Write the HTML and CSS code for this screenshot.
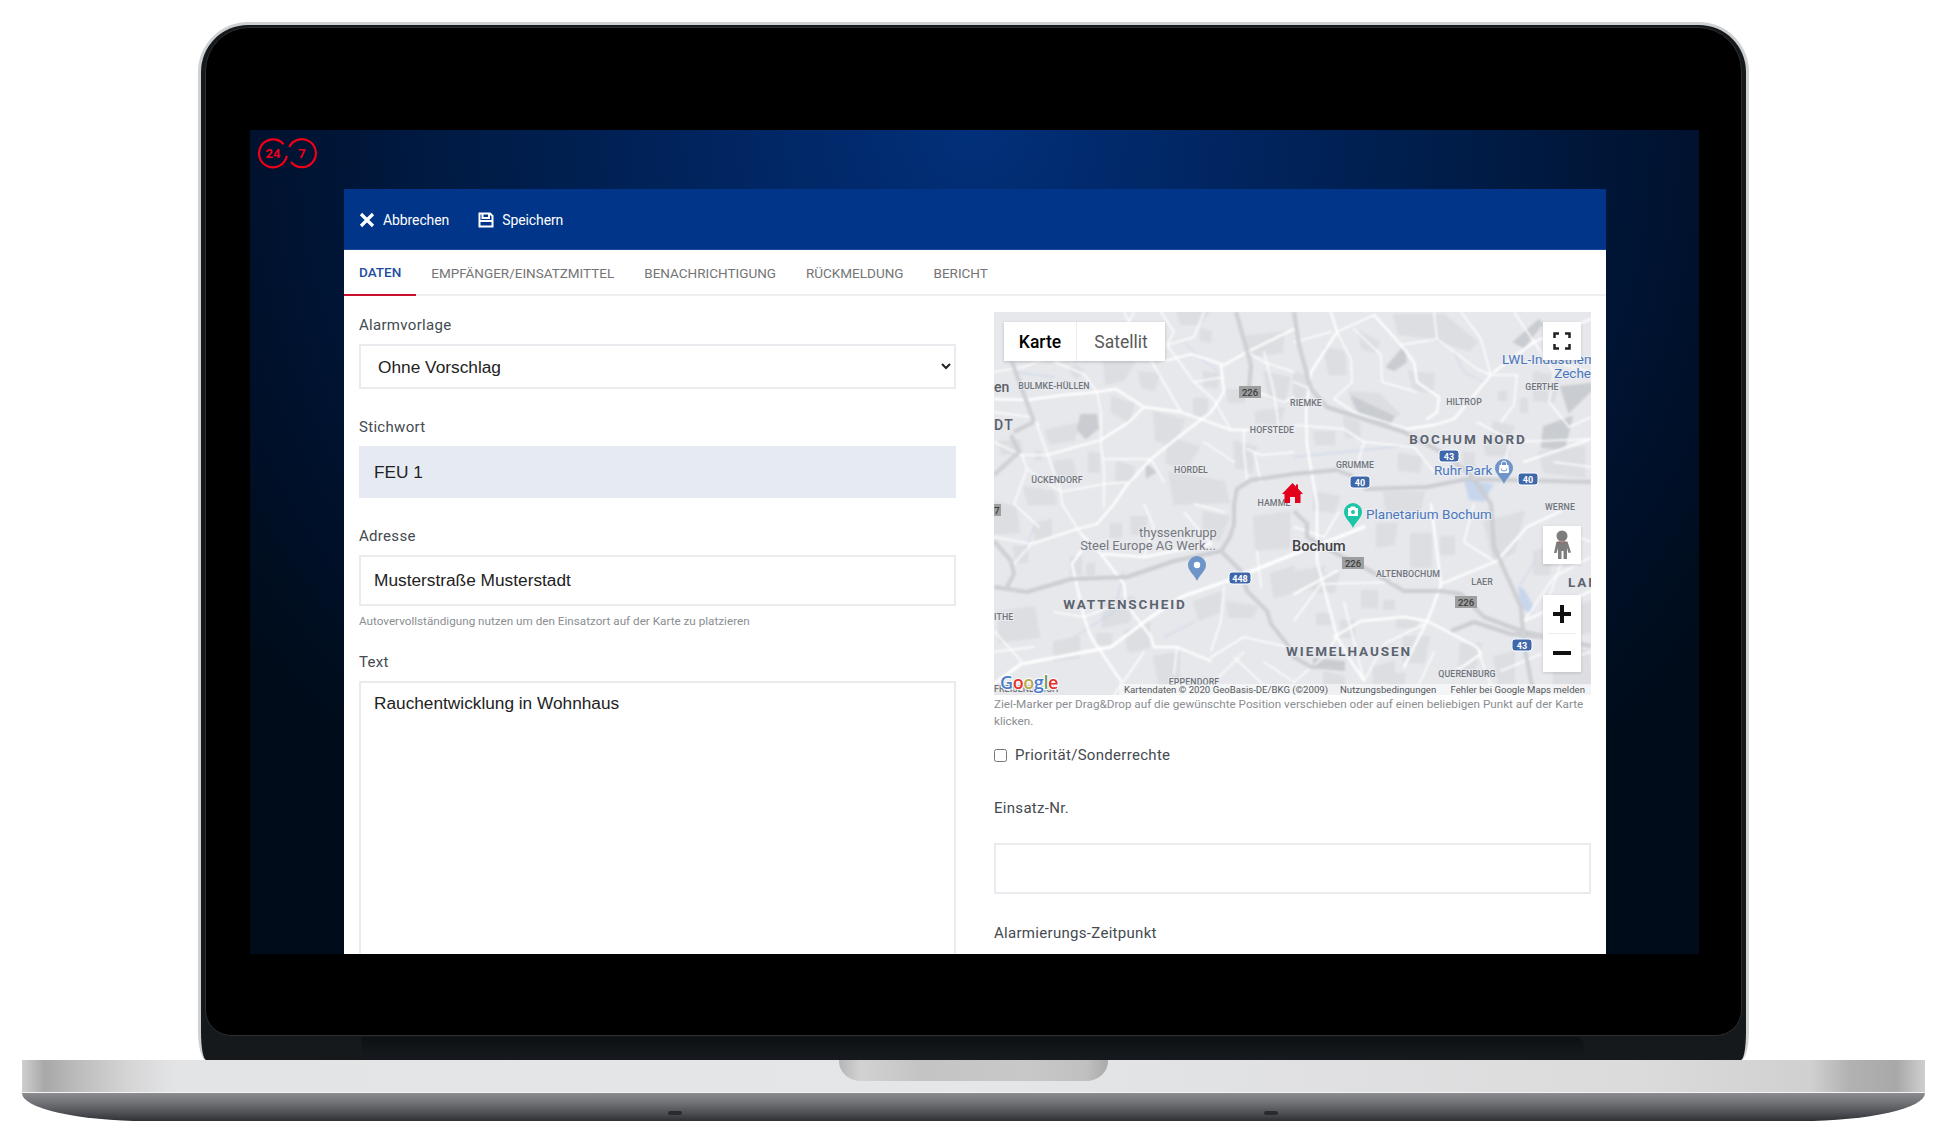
FILE: index.html
```html
<!DOCTYPE html>
<html lang="de">
<head>
<meta charset="utf-8">
<title>Alarm</title>
<link rel="stylesheet" href="styles.css">
</head>
<body>
<div class="device">
  <div class="lid">
    <div class="frame">
      <div class="glass">
        <div class="screen">
          <div class="topbar">
            <svg class="logo" viewBox="0 0 62 34" width="62" height="34">
              <path class="logo-ring" d="M26.700 7.300A14 14 0 1 0 29.800 18.700"/>
              <path class="logo-ring" d="M32.300 10A14 14 0 1 1 34 25"/>
              <text class="logo-text" x="16" y="21" text-anchor="middle">24</text>
              <text class="logo-text" x="45" y="21" text-anchor="middle">7</text>
            </svg>
          </div>
          <div class="panel">
            <div class="toolbar">
              <button class="tool">
                <svg class="tool-icon" viewBox="0 0 16 16" width="16" height="16"><path d="M2 2l12 12M14 2L2 14"/></svg>
                Abbrechen
              </button>
              <button class="tool">
                <svg class="tool-icon tool-icon-thin" viewBox="0 0 16 16" width="16" height="16"><path d="M1.500 1.500h10.500l2.500 2.500v10.500h-13zM4.500 1.500v4.500h6.500v-4.500M1.500 9h13"/></svg>
                Speichern
              </button>
            </div>
            <div class="tabs">
              <span class="tab tab-active">Daten</span>
              <span class="tab">Empfänger/Einsatzmittel</span>
              <span class="tab">Benachrichtigung</span>
              <span class="tab">Rückmeldung</span>
              <span class="tab">Bericht</span>
            </div>
            <div class="form">
              <div class="col">
                <label class="label">Alarmvorlage</label>
                <select class="select"><option>Ohne Vorschlag</option></select>
                <label class="label label-gap">Stichwort</label>
                <input class="input input-filled" value="FEU 1">
                <label class="label label-gap">Adresse</label>
                <input class="input" value="Musterstraße Musterstadt">
                <p class="hint hint-short">Autovervollständigung nutzen um den Einsatzort auf der Karte zu platzieren</p>
                <label class="label">Text</label>
                <textarea class="area">Rauchentwicklung in Wohnhaus</textarea>
              </div>
              <div class="col col-right">
                <div class="map">
                  <svg class="map-svg" viewBox="0 0 597 383" width="597" height="383">
                    <defs>
                      <g id="hw-lines">
                        <polyline points="18,50 40,110"/>
                        <polyline points="20,120 40,110"/>
                        <polyline points="17,123 25,140 0,163"/>
                        <polyline points="242,0 257,53 255,77"/>
                        <polyline points="227,239 236,225 240,212 240,192 243,177 257,168 300,162 343,158 358,164 372,177 433,175 473,167 597,170"/>
                        <polyline points="227,239 180,249 133,265 77,267 33,280 0,275"/>
                        <polyline points="300,0 305,33 317,77 333,95 410,120 447,140 477,163 497,192 500,235 527,295 530,332 537,369 540,384"/>
                        <polyline points="300,199 313,212 313,225 343,242 373,257 410,279 447,279 467,282 490,305 530,320 597,334"/>
                        <polyline points="457,319 480,310 517,322 550,325"/>
                        <polyline points="227,239 247,259 253,279 273,299 277,312 293,332 300,345 317,355 350,355"/>
                        <polyline points="0,229 17,249 20,262 13,275"/>
                      </g>
                    </defs>
                    <g class="map-ground">
                      <path class="blob" d="M82 53L90 60 82 66 75 57ZM110 50L140 50 130 68 112 72ZM52 118L84 112 80 128 56 132ZM118 85L140 92 135 110 118 100ZM160 100L190 108 180 135 162 128ZM175 125L205 135 190 160 172 150ZM200 87L213 87 213 105 200 103ZM233 78L250 78 250 90 235 90ZM175 160L230 170 235 190 180 192ZM123 150L140 155 138 170 122 168ZM42 140L47 140 47 147 42 147ZM30 175L60 180 62 192 35 192ZM207 17L217 20 216 30 207 28ZM183 0L215 0 205 12 187 12ZM330 35L350 40 352 62 335 62ZM400 3L450 3 483 30 475 38 430 25 405 22ZM355 80L385 82 405 102 385 112 360 95ZM350 105L365 110 366 125 352 125ZM405 142L428 145 425 160 405 158ZM320 120L340 120 340 132 322 132ZM470 140L480 142 480 155 470 155ZM490 127L515 127 515 143 492 143ZM527 87L533 87 533 100 527 100ZM505 80L512 80 512 88 505 88ZM117 212L127 212 127 225 117 225ZM137 205L153 205 150 222 138 222ZM40 212L57 208 57 225 42 228ZM20 235L33 235 33 250 22 250ZM77 245L87 245 87 262 77 262ZM93 252L100 252 100 262 93 262ZM200 290L228 280 225 300 205 308ZM233 290L263 295 258 305 235 305ZM103 322L117 322 117 332 103 332ZM160 345L185 340 185 372 165 372ZM277 262L300 255 300 280 280 285ZM417 222L437 222 437 255 417 255ZM383 212L403 212 400 232 383 235ZM447 225L460 225 460 242 447 242ZM368 279L383 279 383 295 368 295ZM390 289L400 289 400 297 390 297ZM323 302L337 302 337 312 323 312ZM347 309L360 309 360 325 347 325ZM403 307L423 307 423 315 403 315ZM380 355L400 350 400 368 380 372ZM467 332L487 332 480 360 465 358ZM393 362L410 362 410 372 393 372ZM250 25L290 20 288 40 255 45ZM262 100L290 96 285 112 262 110ZM0 190L22 195 25 220 0 222ZM490 210L530 200 520 240 500 250ZM540 240L560 235 555 262 540 262ZM560 300L597 290 597 320 565 325ZM110 290L140 285 135 310 108 315ZM300 260L330 255 325 275 300 280ZM5 130L25 128 28 140 8 142ZM60 150L78 148 82 165 62 168ZM145 60L165 62 160 78 148 75ZM240 130L262 135 258 160 242 155ZM270 60L296 66 290 90 275 86ZM210 60L225 62 222 76 210 74ZM95 140L105 142 105 160 95 160ZM365 20L385 30 380 40 368 36ZM300 60L315 65 310 85 300 85ZM415 60L440 62 438 80 420 78ZM540 60L565 65 560 90 540 88ZM500 110L520 115 515 125 498 122ZM545 140L590 135 590 165 550 160ZM320 180L345 185 340 200 320 198ZM390 180L430 180 425 200 392 200ZM5 300L40 295 45 325 5 330ZM130 320L155 310 155 335 135 340ZM60 330L85 325 85 345 60 348ZM210 200L235 205 225 228 208 225ZM260 205L295 200 295 235 262 238ZM320 262L345 262 340 280 320 280ZM410 325L435 325 430 350 410 350ZM500 345L520 340 520 370 505 372ZM560 330L595 340 597 372 560 372ZM330 360L350 365 350 383 330 383Z"/>
                      <path class="blob-dark" d="M87 103L102 103 104 116 92 126 84 118ZM152 152L161 160 153 165ZM393 55L410 35 412 50 400 58ZM520 30L545 8 548 12 530 35ZM550 115L578 105 570 137 548 135ZM567 75L597 72 597 78 575 100ZM320 347L350 350 350 358 320 355ZM358 85L400 105 395 112 365 100Z"/>
                      <path class="lake" d="M524 275L530 277 540 295 537 302 530 298 525 285ZM470 168L500 172 490 190 475 188Z"/>
                      <path class="stream" d="M460 40L470 60 490 70M300 145L400 135 430 130M190 30L205 45 225 60M60 65L20 60M540 250L525 275M130 260L120 300 80 325M200 310L170 325M40 215L30 240"/>
                      <g class="roads">
                        <polyline class="r2" points="0,87 33,88 70,83 103,80 122,77 150,95 187,100 207,107 237,118 300,118"/>
                        <polyline class="r1" points="90,62 103,80 107,100 107,133 110,157 110,195"/>
                        <polyline class="r2" points="53,143 107,128 135,110 150,95"/>
                        <polyline class="r1" points="158,50 187,100"/>
                        <polyline class="r2" points="167,50 197,42 230,53 253,40 300,17"/>
                        <polyline class="r1" points="173,33 200,70 220,88 237,118"/>
                        <polyline class="r2" points="227,53 230,80 217,100 187,123 157,147 133,173 120,192 103,212"/>
                        <polyline class="r1" points="43,113 67,180 68,192 87,222"/>
                        <polyline class="r1" points="28,143 53,143"/>
                        <polyline class="r1" points="28,143 33,157 67,180 110,172 133,170"/>
                        <polyline class="r1" points="110,147 157,147"/>
                        <polyline class="r1" points="253,137 267,143 300,140"/>
                        <polyline class="r1" points="250,118 250,140 253,167"/>
                        <polyline class="r1" points="167,0 180,20 173,33"/>
                        <polyline class="r1" points="0,100 37,105 45,113"/>
                        <polyline class="r1" points="90,62 60,50 100,40 130,20 140,0"/>
                        <polyline class="r2" points="337,0 343,20 317,60 312,100 313,133 323,192 323,249 343,325 357,349 370,369"/>
                        <polyline class="r1" points="343,20 380,3"/>
                        <polyline class="r2" points="380,3 407,33 420,50 423,70 445,85 443,100 433,107"/>
                        <polyline class="r1" points="360,17 387,43 388,70 423,80"/>
                        <polyline class="r1" points="343,20 357,47 358,70 340,87"/>
                        <polyline class="r1" points="407,33 443,27 483,57 497,63 523,63"/>
                        <polyline class="r2" points="497,63 460,107 440,113 413,117"/>
                        <polyline class="r1" points="523,63 520,93 507,110"/>
                        <polyline class="r2" points="500,60 540,30 597,7"/>
                        <polyline class="r1" points="467,0 487,27 497,63"/>
                        <polyline class="r1" points="300,113 350,117 370,130 363,153"/>
                        <polyline class="r2" points="530,150 597,127"/>
                        <polyline class="r1" points="510,153 517,127"/>
                        <polyline class="r2" points="437,192 447,272 440,292 433,309 410,355"/>
                        <polyline class="r2" points="447,272 503,249 533,215 567,199"/>
                        <polyline class="r2" points="300,282 343,259"/>
                        <polyline class="r1" points="300,309 327,272 400,270"/>
                        <polyline class="r2" points="340,325 367,309 410,305 433,309 483,335 487,342 453,365"/>
                        <polyline class="r1" points="370,369 390,332 430,312"/>
                        <polyline class="r1" points="507,359 547,342"/>
                        <polyline class="r2" points="530,309 597,279"/>
                        <polyline class="r1" points="567,252 550,299"/>
                        <polyline class="r3" points="300,242 233,269 187,285 157,305 117,335 27,352 0,372"/>
                        <polyline class="r2" points="37,232 83,217 103,212"/>
                        <polyline class="r1" points="37,232 20,252"/>
                        <polyline class="r1" points="0,225 37,232"/>
                        <polyline class="r2" points="90,235 78,252 90,305 97,325 127,369"/>
                        <polyline class="r2" points="110,242 150,245 217,232"/>
                        <polyline class="r2" points="87,222 107,242 130,272 132,292 157,325 160,335 183,335 217,349"/>
                        <polyline class="r1" points="183,335 180,362"/>
                        <polyline class="r1" points="0,319 27,349"/>
                        <polyline class="r1" points="217,345 250,325 293,335"/>
                        <polyline class="r1" points="230,275 227,309 217,339"/>
                        <polyline class="r1" points="263,239 267,275"/>
                        <polyline class="r3" points="233,269 300,242 345,225 370,215"/>
                        <polyline class="r1" points="0,60 30,55 55,45"/>
                        <polyline class="r1" points="0,130 28,143"/>
                        <polyline class="r1" points="33,157 20,192"/>
                        <polyline class="r1" points="133,173 155,150"/>
                        <polyline class="r1" points="157,147 170,170"/>
                        <polyline class="r1" points="200,70 230,65"/>
                        <polyline class="r1" points="260,140 267,170"/>
                        <polyline class="r1" points="270,40 280,80 285,118"/>
                        <polyline class="r1" points="255,77 290,90 300,85"/>
                        <polyline class="r1" points="300,60 270,50 253,40"/>
                        <polyline class="r1" points="130,0 145,30 158,50"/>
                        <polyline class="r1" points="210,0 200,25 173,33"/>
                        <polyline class="r1" points="210,130 240,150"/>
                        <polyline class="r1" points="300,30 337,20"/>
                        <polyline class="r1" points="443,27 440,0"/>
                        <polyline class="r1" points="520,0 540,30"/>
                        <polyline class="r1" points="560,50 597,60"/>
                        <polyline class="r1" points="540,30 560,60 555,90"/>
                        <polyline class="r1" points="560,150 597,155"/>
                        <polyline class="r1" points="370,130 420,135 440,160"/>
                        <polyline class="r1" points="340,87 360,100 413,117"/>
                        <polyline class="r1" points="483,110 520,130 597,127"/>
                        <polyline class="r1" points="555,90 575,115 597,105"/>
                        <polyline class="r1" points="300,70 317,77"/>
                        <polyline class="r1" points="300,215 330,225 345,200"/>
                        <polyline class="r1" points="480,192 470,230 500,249"/>
                        <polyline class="r1" points="560,215 597,230"/>
                        <polyline class="r1" points="597,245 560,265 530,309"/>
                        <polyline class="r1" points="350,290 370,369"/>
                        <polyline class="r1" points="300,370 330,345 343,325"/>
                        <polyline class="r1" points="440,340 420,383"/>
                        <polyline class="r1" points="483,335 500,383"/>
                        <polyline class="r1" points="560,350 597,340"/>
                        <polyline class="r1" points="20,192 45,215"/>
                        <polyline class="r1" points="150,192 160,215 150,245"/>
                        <polyline class="r1" points="200,192 230,200"/>
                        <polyline class="r1" points="150,340 120,383"/>
                        <polyline class="r1" points="240,345 280,383"/>
                        <polyline class="r1" points="220,370 250,340"/>
                        <polyline class="r1" points="60,300 90,305 130,290"/>
                        <polyline class="r1" points="0,340 40,335"/>
                        <polyline class="r1" points="270,350 300,370"/>
                        <polyline class="r1" points="190,200 217,232"/>
                      </g>
                      <use class="hw-outer" href="#hw-lines"/>
                      <use class="hw-inner" href="#hw-lines"/>
                    </g>
                    <g class="map-labels">
                      <text class="mt-big" x="0" y="80">en</text>
                      <text class="mt-big mt-wide" x="0" y="118">DT</text>
                      <text class="mt-small" x="60" y="77" text-anchor="middle">BULMKE-HÜLLEN</text>
                      <text class="mt-small" x="63" y="171" text-anchor="middle">ÜCKENDORF</text>
                      <text class="mt-small" x="197" y="161" text-anchor="middle">HORDEL</text>
                      <text class="mt-small" x="278" y="121" text-anchor="middle">HOFSTEDE</text>
                      <text class="mt-small" x="280" y="194" text-anchor="middle">HAMME</text>
                      <text class="mt-small" x="312" y="94" text-anchor="middle">RIEMKE</text>
                      <text class="mt-small" x="470" y="93" text-anchor="middle">HILTROP</text>
                      <text class="mt-small" x="548" y="78" text-anchor="middle">GERTHE</text>
                      <text class="mt-small" x="361" y="156" text-anchor="middle">GRUMME</text>
                      <text class="mt-small" x="566" y="198" text-anchor="middle">WERNE</text>
                      <text class="mt-small" x="414" y="265" text-anchor="middle">ALTENBOCHUM</text>
                      <text class="mt-small" x="488" y="273" text-anchor="middle">LAER</text>
                      <text class="mt-small" x="473" y="365" text-anchor="middle">QUERENBURG</text>
                      <text class="mt-small" x="200" y="373" text-anchor="middle">EPPENDORF</text>
                      <text class="mt-small" x="0" y="308">ITHE</text>
                      <text class="mt-small" x="0" y="380">FREISENBRUCH</text>
                      <text class="mt-district" x="474" y="132" text-anchor="middle">BOCHUM NORD</text>
                      <text class="mt-district" x="131" y="297" text-anchor="middle">WATTENSCHEID</text>
                      <text class="mt-district" x="355" y="344" text-anchor="middle">WIEMELHAUSEN</text>
                      <text class="mt-district" x="574" y="275">LAN</text>
                      <text class="mt-city" x="298" y="239">Bochum</text>
                      <text class="mt-poi" x="184" y="225" text-anchor="middle">thyssenkrupp</text>
                      <text class="mt-poi" x="154" y="238" text-anchor="middle">Steel Europe AG Werk...</text>
                      <text class="mt-blue" x="508" y="52">LWL-Industriem</text>
                      <text class="mt-blue" x="597" y="66" text-anchor="end">Zeche</text>
                      <text class="mt-blue" x="440" y="163">Ruhr Park</text>
                      <text class="mt-blue" x="372" y="207">Planetarium Bochum</text>

                      <rect class="sh-gray" x="245" y="74" width="22" height="12"/><text class="sh-text-d" x="256" y="83.500" text-anchor="middle">226</text>
                      <rect class="sh-gray" x="348" y="245" width="22" height="12"/><text class="sh-text-d" x="359" y="254.500" text-anchor="middle">226</text>
                      <rect class="sh-gray" x="461" y="284" width="22" height="12"/><text class="sh-text-d" x="472" y="293.500" text-anchor="middle">226</text>
                      <rect class="sh-gray" x="-4" y="192" width="11" height="12"/><text class="sh-text-d" x="3" y="201.500" text-anchor="middle">7</text>
                      <rect class="sh-blue" x="356" y="164" width="20" height="12"/><text class="sh-text" x="366" y="173.500" text-anchor="middle">40</text>
                      <rect class="sh-blue" x="524" y="161" width="20" height="12"/><text class="sh-text" x="534" y="170.500" text-anchor="middle">40</text>
                      <rect class="sh-blue" x="445" y="138" width="20" height="12"/><text class="sh-text" x="455" y="147.500" text-anchor="middle">43</text>
                      <rect class="sh-blue" x="518" y="327" width="20" height="12"/><text class="sh-text" x="528" y="336.500" text-anchor="middle">43</text>
                      <rect class="sh-blue" x="235" y="260" width="22" height="12"/><text class="sh-text" x="246" y="269.500" text-anchor="middle">448</text>

                      <path class="pin-blue" d="M203 244a9 9 0 0 1 9 9c0 6-6 9-9 16-3-7-9-10-9-16a9 9 0 0 1 9-9z"/>
                      <circle class="pin-dot" cx="203" cy="253" r="3.200"/>
                      <path class="pin-blue" d="M510 147a9 9 0 0 1 9 9c0 6-6 9-9 16-3-7-9-10-9-16a9 9 0 0 1 9-9z"/>
                      <path class="pin-dot" d="M505.500 153h9l.6 6.500a1.500 1.500 0 0 1-1.500 1.500h-7.200a1.500 1.500 0 0 1-1.500-1.500z"/>
                      <path class="pin-bag-top" d="M507.500 153v-1.500a2.500 2.500 0 0 1 5 0v1.500"/>
                      <path class="pin-bag" d="M507 156.500a3 2.500 0 0 0 6 0"/>
                      <path class="pin-teal" d="M359 191a9 9 0 0 1 9 9c0 6-6 9-9 16-3-7-9-10-9-16a9 9 0 0 1 9-9z"/>
                      <path class="pin-dot" d="M354 196h2l1-1.500h4l1 1.500h2v8h-10z"/>
                      <circle class="pin-lens" cx="359" cy="200" r="2"/>
                      <path class="house" d="M298.500 171L302 174.500V172.500H304V176.500L309 182H306.500V191H301V185H296V191H290.500V182H288Z"/>

                      <rect class="attr-strip" x="125" y="372" width="472" height="11"/>
                      <text class="attr" x="130" y="381">Kartendaten © 2020 GeoBasis-DE/BKG (©2009)</text>
                      <text class="attr" x="346" y="381">Nutzungsbedingungen</text>
                      <text class="attr" x="591" y="381" text-anchor="end">Fehler bei Google Maps melden</text>
                      <text class="google" x="6" y="377"><tspan class="g-b">G</tspan><tspan class="g-r">o</tspan><tspan class="g-y">o</tspan><tspan class="g-b">g</tspan><tspan class="g-g">l</tspan><tspan class="g-r">e</tspan></text>
                    </g>
                  </svg>
                  <div class="map-type">
                    <span class="map-type-btn map-type-on">Karte</span>
                    <span class="map-type-btn">Satellit</span>
                  </div>
                  <div class="map-tools">
                    <div class="map-btn map-full">
                      <svg viewBox="0 0 18 18" width="18" height="18"><path class="ic-line" d="M1.500 6V1.500H6M12 1.500h4.500V6M16.500 12v4.500H12M6 16.500H1.500V12"/></svg>
                    </div>
                    <div class="map-btn map-peg">
                      <svg viewBox="0 0 20 30" width="20" height="30"><circle class="peg" cx="10" cy="6" r="5.500"/><path class="peg" d="M4.500 11.500h11l3.500 11-2.500.5-1.500-5v11h-3.500v-8h-2v8H6v-11l-1.500 5L2 23z"/><path class="peg-eye" d="M8 11.500l-.6 1.400M12 11.500l.6 1.400"/></svg>
                    </div>
                    <div class="map-zoom">
                      <div class="map-zoom-btn"><svg viewBox="0 0 18 18" width="18" height="18"><path class="ic-fat" d="M9 0v18M0 9h18"/></svg></div>
                      <div class="map-zoom-btn map-zoom-last"><svg viewBox="0 0 18 18" width="18" height="18"><path class="ic-fat" d="M0 9h18"/></svg></div>
                    </div>
                  </div>
                </div>
                <p class="hint hint-map">Ziel-Marker per Drag&amp;Drop auf die gewünschte Position verschieben oder auf einen beliebigen Punkt auf der Karte klicken.</p>
                <label class="check-row"><input type="checkbox" class="check"><span>Priorität/Sonderrechte</span></label>
                <label class="label label-einsatz">Einsatz-Nr.</label>
                <input class="input">
                <label class="label label-zeit">Alarmierungs-Zeitpunkt</label>
              </div>
            </div>
          </div>
        </div>
      </div>
      <div class="hinge"><div class="hinge-inner"></div></div>
    </div>
  </div>
  <div class="base">
    <div class="base-top"><div class="notch"></div></div>
    <div class="base-bottom">
      <span class="mic mic-left"></span>
      <span class="mic mic-right"></span>
    </div>
  </div>
</div>
</body>
</html>
```

FILE: styles.css
```css
* { box-sizing: border-box; }
html, body { margin: 0; padding: 0; background: #fff; }
body { height: 1142px; overflow: hidden; font-family: Roboto, "Liberation Sans", sans-serif; }

.device { display: flex; flex-direction: column; align-items: center; padding-top: 22px; width: 1946px; }

/* lid */
.lid { width: 1551px; height: 1038px; margin-left: 1px; padding: 3px 3px 0; background: #cfd0d2; border-radius: 50px 50px 8px 8px / 50px 50px 30px 30px; }
.frame { height: 100%; padding: 2px 2px 0; background: #15191c; border-radius: 47px 47px 5px 5px / 47px 47px 28px 28px; display: flex; flex-direction: column; }
.glass { flex: none; height: 1009px; border: 1px solid #2c2e30; border-radius: 44px 44px 26px 26px; background: #000; margin: 0 2px; padding: 102px 42px 0 44px; }
.hinge { flex: 1; padding: 1px 160px 1px 159px; }
.hinge-inner { height: 100%; background: linear-gradient(#0d1012, #161a1e); border-radius: 0 8px 0 0; }

.screen { height: 824px; display: flex; flex-direction: column; overflow: hidden; background: radial-gradient(ellipse 62% 105% at 50% 0, #02307a 0, #012663 25%, #001c47 55%, #00112c 82%, #000c1a 100%); }
.topbar { height: 59px; flex: none; padding: 7px 0 0 7px; }
.logo { display: block; }
.logo-ring { fill: none; stroke: #f00018; stroke-width: 2.200; }
.logo-text { font: 700 13px Roboto, sans-serif; fill: #f00018; }

/* app panel */
.panel { flex: 1; margin-left: 94px; width: 1262px; background: #fff; display: flex; flex-direction: column; overflow: hidden; }
.toolbar { height: 61px; flex: none; background: #00358a; border-bottom: 1px solid #1a4a98; display: flex; align-items: center; padding: 2px 0 0 15px; gap: 29px; }
.tool { display: flex; align-items: center; gap: 8px; padding: 0; border: 0; background: none; color: #fff; font: 14px Roboto, sans-serif; letter-spacing: -.1px; }
.tool-icon { fill: none; stroke: #fff; stroke-width: 3.200; }
.tool-icon-thin { stroke-width: 2; }

.tabs { height: 46px; flex: none; display: flex; border-bottom: 2px solid #eeeeee; }
.tab { height: 46px; padding: 0 15px; display: flex; align-items: center; font-size: 13.500px; font-weight: 400; text-transform: uppercase; color: #757575; white-space: nowrap; }
.tab-active { color: #1c4ea0; font-weight: 500; border-bottom: 2px solid #c8102e; }

.form { flex: 1; display: grid; grid-template-columns: 597px 597px; column-gap: 38px; padding: 16px 15px 0; align-items: start; }
.col { display: flex; flex-direction: column; padding-top: 4px; }
.col-right { padding-top: 0; }

.label { display: block; height: 18px; line-height: 18px; font-size: 15px; letter-spacing: .3px; color: #444a50; margin-bottom: 10px; }
.label-gap { margin-top: 29px; }
.select { width: 100%; height: 45px; padding: 0 0 0 13px; border: 2px solid #e9ebee; background: #fff; font: 17.300px "Liberation Sans", Arial, sans-serif; color: #222; border-radius: 0; }
.input { display: block; width: 100%; height: 51px; flex: none; padding: 0 13px; border: 2px solid #e9ebee; background: #fff; font: 17.300px "Liberation Sans", Arial, sans-serif; color: #222; border-radius: 0; outline: 0; }
.input-filled { height: 52px; background: #e6eaf3; border-color: #e6eaf3; }
.area { display: block; width: 100%; height: 300px; padding: 9px 13px; resize: none; border: 2px solid #e9ebee; font: 17.250px/1.3 "Liberation Sans", Arial, sans-serif; color: #222; border-radius: 0; outline: 0; }
.hint { margin: 0; font-size: 11.700px; color: #8a8e92; }
.hint-short { line-height: 18px; margin: 6px 0 23px; }
.hint-map { line-height: 17px; margin-top: 1px; }

.check-row { display: flex; align-items: center; gap: 8px; height: 20px; margin-top: 15px; font-size: 15px; letter-spacing: .3px; color: #444a50; }
.check { margin: 0; width: 13px; height: 13px; }
.label-einsatz { margin: 34px 0 26px; }
.label-zeit { margin: 30px 0 0; }

/* map */
.map { position: relative; width: 597px; height: 383px; overflow: hidden; background: #e7e8ec; }
.map-svg { display: block; }
.map-ground { filter: blur(.8px); }
.blob { fill: #dcdee2; stroke: #dcdee2; stroke-width: 2px; stroke-linejoin: round; }
.blob-dark { fill: #c9ccd1; stroke: #c9ccd1; stroke-width: 2px; stroke-linejoin: round; }
.lake { fill: #c8d6ec; }
.stream { fill: none; stroke: #c5d3e8; stroke-width: 1; }
.roads polyline { fill: none; stroke: #fff; stroke-linejoin: round; stroke-linecap: round; }
.r1 { stroke-width: 1.500; }
.r2 { stroke-width: 2.300; }
.r3 { stroke-width: 3.200; }
.hw-outer { fill: none; stroke: #bfc2c6; stroke-width: 3.500px; stroke-linejoin: round; }
.hw-inner { fill: none; stroke: #dddee1; stroke-width: 1.200px; stroke-linejoin: round; }

.mt-small { font: 500 8.800px Roboto, sans-serif; letter-spacing: .1px; fill: #6f747b; stroke: #e9eaee; stroke-width: 2px; paint-order: stroke; }
.mt-big { font: 500 14px Roboto, sans-serif; fill: #5a6068; }
.mt-wide { letter-spacing: 1.500px; }
.mt-district { font: 700 13.500px Roboto, sans-serif; letter-spacing: 1.900px; fill: #5c6470; stroke: #e9eaee; stroke-width: 2px; paint-order: stroke; }
.mt-city { font: 500 14.500px Roboto, sans-serif; fill: #3f4246; stroke: #eff0f2; stroke-width: 2px; paint-order: stroke; }
.mt-poi { font: 13px Roboto, sans-serif; fill: #74787e; stroke: #e9eaee; stroke-width: 2px; paint-order: stroke; }
.mt-blue { font: 13.500px Roboto, sans-serif; fill: #4a76bc; stroke: #eceef2; stroke-width: 2px; paint-order: stroke; }
.sh-gray { fill: #9d9e9f; }
.sh-text-d { font: 500 9.500px Roboto, sans-serif; fill: #3c3c3c; }
.sh-blue { fill: #3f68ab; rx: 3px; stroke: #fff; stroke-width: 1px; }
.sh-text { font: 700 9px Roboto, sans-serif; fill: #fff; }
.pin-blue { fill: #6f94c9; }
.pin-teal { fill: #1cc5a5; }
.pin-dot { fill: #fff; }
.pin-lens { fill: #1cc5a5; }
.pin-bag { fill: none; stroke: #6f94c9; stroke-width: 1; }
.pin-bag-top { fill: none; stroke: #fff; stroke-width: 1; }
.house { fill: #e2001a; }
.attr-strip { fill: #fff; opacity: .55; }
.attr { font: 9.600px Roboto, sans-serif; fill: #55585c; }
.google { font: 600 18px "Open Sans", "Liberation Sans", sans-serif; letter-spacing: -.4px; stroke: #fff; stroke-width: 2px; paint-order: stroke; }
.g-b { fill: #4a7ccc; }
.g-r { fill: #e2302a; }
.g-y { fill: #b8a94a; }
.g-g { fill: #6f9a64; }

.map-type { position: absolute; left: 10px; top: 10px; display: flex; height: 39px; background: #fff; box-shadow: 0 1px 3px rgba(0,0,0,.2); }
.map-type-btn { display: flex; align-items: center; justify-content: center; width: 88px; font-size: 17.500px; color: #5a5a5a; }
.map-type-btn:first-child { width: 73px; border-right: 1px solid #eceded; }
.map-type-on { color: #000; font-weight: 500; }
.map-tools { position: absolute; left: 549px; top: 10px; display: flex; flex-direction: column; width: 38px; }
.map-btn { width: 38px; height: 38px; background: #fff; display: flex; align-items: center; justify-content: center; box-shadow: 0 1px 3px rgba(0,0,0,.15); }
.map-peg { margin-top: 166px; }
.map-zoom { margin-top: 31px; height: 77px; background: #fff; box-shadow: 0 1px 3px rgba(0,0,0,.15); }
.map-zoom-btn { height: 38px; display: flex; align-items: center; justify-content: center; }
.map-zoom-btn svg { width: 18px; height: 18px; }
.map-zoom-last { height: 39px; border-top: 1px solid #eceded; margin: 0 5px; }
.ic-line { fill: none; stroke: #222; stroke-width: 2.500; }
.ic-fat { fill: none; stroke: #111; stroke-width: 4; }
.peg { fill: #7d7d7d; }
.peg-eye { fill: none; stroke: #d03030; stroke-width: 1; }

/* base */
.base { width: 1903px; height: 61px; display: flex; flex-direction: column; }
.base-top { height: 33px; flex: none; display: flex; justify-content: center; background: linear-gradient(90deg, #cfcfcf 0, #a8a8a8 1.200%, #bcbcbc 2.900%, #d5d5d6 5.600%, #e3e4e6 8%, #e5e6e8 50%, #dbdbdc 85%, #d0d0d0 94%, #b2b2b2 96%, #a8a8a8 98.500%, #cfcfcf 100%); border-bottom: 1px solid #f4f4f4; }
.notch { width: 269px; height: 21px; border-radius: 0 0 22px 22px / 0 0 20px 20px; background: linear-gradient(90deg, #b4b5b7 0, #d2d2d3 8%, #c4c4c5 30%, #c8c8c9 70%, #c0c0c0 92%, #a9a9aa 100%); }
.base-bottom { position: relative; flex: 1; background: linear-gradient(#8b8c90 0, #75767a 30%, #505156 70%, #2f3034 100%); border-radius: 0 0 124px 124px / 0 0 28px 28px; }
.mic { position: absolute; top: 18px; width: 14px; height: 4px; border-radius: 2px; background: #2b2b2d; }
.mic-left { left: 646px; }
.mic-right { left: 1242px; }
```
